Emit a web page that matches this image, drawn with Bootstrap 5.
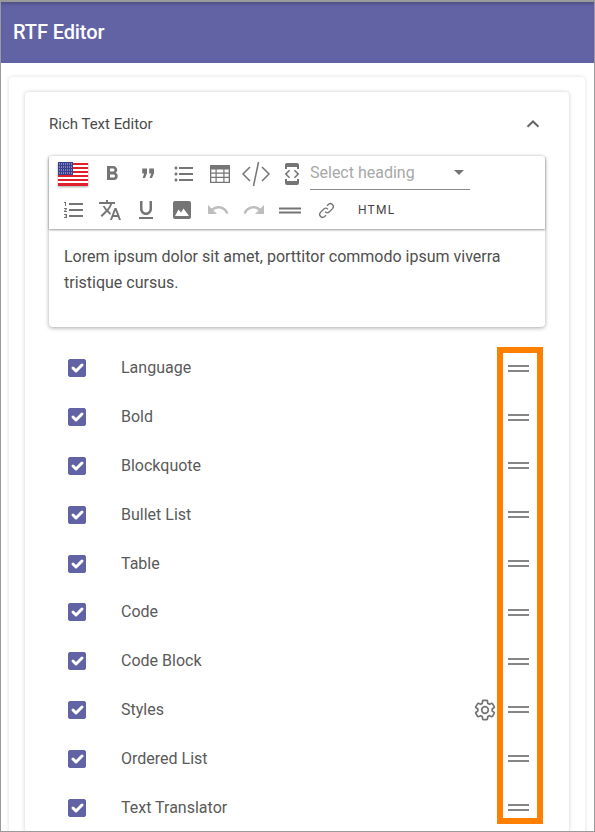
<!DOCTYPE html>
<html lang="en">
<head>
  <meta charset="UTF-8">
  <title>RTF Editor</title>
  <link href="https://cdn.jsdelivr.net/npm/bootstrap@5.3.0/dist/css/bootstrap.min.css" rel="stylesheet">
  <style>
    html, body { height: 100%; overflow: hidden; }
    body { background: #fff; font-family: Roboto, "Liberation Sans", sans-serif; color: #555; }

    .app-frame { height: 832px; overflow: hidden; border: 1px solid #9a9a9a; border-top-width: 2px; }
    .app-bar { height: 61px; background: #6163a5; color: #fff; font-size: 20px; font-weight: 500; letter-spacing: -.1px; padding: 0 0 2px 12px; box-shadow: inset 0 4px 4px -3px rgba(0,0,0,.3); }

    .outer-panel { margin: 14px 9px 0 8px; padding: 15px 16px 15px 16px; border: 0; border-radius: 4px; box-shadow: 0 0 4px rgba(0,0,0,.14); }
    .inner-panel { padding: 0 24px; border: 0; border-radius: 4px; box-shadow: 0 0 4px rgba(0,0,0,.2); }
    .panel-head { height: 64px; font-size: 15px; color: #4a4a4a; }

    .editor-box { border-radius: 4px; box-shadow: 0 1px 4px rgba(0,0,0,.35); }
    .tool-area { height: 73px; padding-left: 7px; box-shadow: 0 1px 2px rgba(0,0,0,.4); position: relative; }
    .tool-row { height: 36px; }
    .tool-btn { width: 36px; height: 36px; flex: none; color: #757575; }
    .tool-btn svg { width: 24px; height: 24px; fill: currentColor; }
    .tool-btn.is-off { color: #bdbdbd; }
    .tool-btn svg.code-icon { width: 30px; height: 30px; fill: none; stroke: currentColor; stroke-width: 1.5; }
    .tool-btn svg.link-icon { width: 21px; height: 21px; fill: none; stroke: currentColor; stroke-width: 1.5; }
    .flag-btn { width: 38px; padding-right: 4px; }
    .flag-btn svg { width: 30px; height: 24px; filter: drop-shadow(0 1px 1px rgba(0,0,0,.35)); }
    .heading-pick { width: 160px; height: 34px; align-self: flex-start; font-size: 16px; color: #a8a8a8; border-bottom: 1px solid #8a8a8a; }
    .pick-caret { width: 0; height: 0; margin-right: 6px; border-left: 5px solid transparent; border-right: 5px solid transparent; border-top: 5px solid #757575; }
    .html-btn { font-size: 12px; font-weight: 400; letter-spacing: 1.2px; color: #444; margin-left: 14px; }
    .editor-text { height: 98px; padding: 15px 15px; font-size: 16px; line-height: 26px; color: #4f4f4f; }

    .field-list { margin-top: 17px; }
    .field-row { height: 48.8px; font-size: 16px; color: #5a5a5a; }
    .field-row .form-check-input { width: 18px; height: 18px; margin: 0 0 0 19px; flex: none; border-radius: 2px; background-color: #6163a5; border-color: #6163a5; background-size: 125%; background-position: center; opacity: 1; }
    .field-name { margin-left: 35px; }
    .gear-icon { width: 24px; height: 24px; margin-right: 11px; fill: none; stroke: #757575; stroke-width: 1.7; }
    .drag-handle { width: 21px; margin-right: 16px; height: 7px; border-top: 2px solid #858585; border-bottom: 2px solid #858585; flex: none; }
    .orange-mark { position: absolute; left: 448px; top: 3px; width: 46px; height: 477px; border: 6px solid #ff8000; pointer-events: none; }
  </style>
</head>
<body>
  <div class="app-frame">
    <div class="app-bar d-flex align-items-center">RTF Editor</div>

    <div class="card outer-panel">
      <div class="card inner-panel">
        <div class="panel-head d-flex align-items-center justify-content-between">
          <span>Rich Text Editor</span>
          <svg width="24" height="24" viewBox="0 0 24 24" fill="none" stroke="#666" stroke-width="2"><path d="M6.5 14.8 12 9.5l5.5 5.3"/></svg>
        </div>

        <div class="editor-box bg-white">
          <div class="tool-area">
            <div class="tool-row d-flex align-items-center">
              <span class="tool-btn flag-btn d-flex align-items-center justify-content-center">
                <svg viewBox="0 0 30 24">
                  <rect width="30" height="24" fill="#fff"/>
                  <path d="M0 1h30v2H0zM0 5h30v2H0zM0 9h30v2H0zM0 13h30v2H0zM0 17h30v2H0zM0 21h30v3H0z" fill="#e0202c"/>
                  <rect width="15" height="13" fill="#3b3f8f"/>
                  <path d="M1 2h13M1 5h13M1 8h13M1 11h13" stroke="#c9cbe6" stroke-width="1" stroke-dasharray="1 1"/>
                </svg>
              </span>
              <span class="tool-btn d-flex align-items-center justify-content-center"><svg viewBox="0 0 24 24"><path d="M15.6 10.79c.97-.67 1.65-1.77 1.65-2.79 0-2.26-1.75-4-4-4H7v14h7.04c2.09 0 3.71-1.7 3.71-3.79 0-1.52-.86-2.82-2.15-3.42zM10 6.5h3c.83 0 1.5.67 1.5 1.5s-.67 1.5-1.5 1.5h-3v-3zm3.5 9H10v-3h3.5c.83 0 1.5.67 1.5 1.5s-.67 1.5-1.5 1.5z"/></svg></span>
              <span class="tool-btn d-flex align-items-center justify-content-center"><svg viewBox="0 0 24 24"><path d="M6.2 6.5H11v4.8L9 16H6.6l1.6-4.4h-2zM13.2 6.5H18v4.8L16 16h-2.4l1.6-4.4h-2z"/></svg></span>
              <span class="tool-btn d-flex align-items-center justify-content-center"><svg viewBox="0 0 24 24"><path d="M4 10.5c-.83 0-1.5.67-1.5 1.5s.67 1.5 1.5 1.5 1.5-.67 1.5-1.5-.67-1.5-1.5-1.5zm0-6c-.83 0-1.5.67-1.5 1.5S3.17 7.5 4 7.5 5.5 6.83 5.5 6 4.83 4.5 4 4.5zm0 12c-.83 0-1.5.68-1.5 1.5s.68 1.5 1.5 1.5 1.5-.68 1.5-1.5-.67-1.5-1.5-1.5zM7 19h14v-2H7v2zm0-6h14v-2H7v2zm0-8v2h14V5H7z"/></svg></span>
              <span class="tool-btn d-flex align-items-center justify-content-center"><svg viewBox="0 0 24 24"><path fill-rule="evenodd" d="M2 3h20v18H2zM3.3 7.5v3h4.2v-3zm5.4 0v3h6.6v-3zm7.8 0v3h4.2v-3zM3.3 11.7v3h4.2v-3zm5.4 0v3h6.6v-3zm7.8 0v3h4.2v-3zM3.3 15.9v3.8h4.2v-3.8zm5.4 0v3.8h6.6v-3.8zm7.8 0v3.8h4.2v-3.8z"/></svg></span>
              <span class="tool-btn d-flex align-items-center justify-content-center"><svg class="code-icon" viewBox="0 0 30 30"><path d="M9 8 2 15l7 7M21 8l7 7-7 7M17.5 3l-5 24"/></svg></span>
              <span class="tool-btn d-flex align-items-center justify-content-center"><svg viewBox="0 0 24 24"><path d="M7 5h10v2h2V3c0-1.1-.9-1.99-2-1.99L7 1c-1.1 0-2 .9-2 2v4h2V5zm6.9 10.2L17.1 12l-3.2-3.2L15 7.7l4.3 4.3-4.3 4.3zM10.1 15.2 6.9 12l3.2-3.2L9 7.7 4.7 12 9 16.3zM17 19H7v-2H5v4c0 1.1.9 2 2 2h10c1.1 0 2-.9 2-2v-4h-2v2z"/></svg></span>
              <div class="heading-pick d-flex align-items-center justify-content-between">
                <span>Select heading</span><span class="pick-caret"></span>
              </div>
            </div>
            <div class="tool-row d-flex align-items-center">
              <span class="tool-btn d-flex align-items-center justify-content-center"><svg viewBox="0 0 24 24"><path d="M2 17h2v.5H3v1h1v.5H2v1h3v-4H2v1zm1-9h1V4H2v1h1v3zm-1 3h1.8L2 13.1v.9h3v-1H3.2L5 10.9V10H2v1zm5-6v2h14V5H7zm0 14h14v-2H7v2zm0-6h14v-2H7v2z"/></svg></span>
              <span class="tool-btn d-flex align-items-center justify-content-center"><svg viewBox="0 0 24 24"><path d="M12.87 15.07l-2.54-2.51.03-.03c1.74-1.94 2.98-4.17 3.71-6.53H17V4h-7V2H8v2H1v1.99h11.17C11.5 7.92 10.44 9.75 9 11.35 8.07 10.32 7.3 9.19 6.69 8h-2c.73 1.63 1.73 3.17 2.98 4.56l-5.09 5.02L4 19l5-5 3.11 3.11.76-2.04zM18.5 10h-2L12 22h2l1.12-3h4.75L21 22h2l-4.5-12zm-2.62 7l1.62-4.33L19.12 17h-3.24z"/></svg></span>
              <span class="tool-btn d-flex align-items-center justify-content-center"><svg viewBox="0 0 24 24"><path d="M12 17c3.31 0 6-2.69 6-6V3h-2.5v8c0 1.93-1.57 3.5-3.5 3.5S8.5 12.93 8.5 11V3H6v8c0 3.31 2.69 6 6 6zm-7 2v2h14v-2H5z"/></svg></span>
              <span class="tool-btn d-flex align-items-center justify-content-center"><svg viewBox="0 0 24 24"><path d="M21 19V5c0-1.1-.9-2-2-2H5c-1.1 0-2 .9-2 2v14c0 1.1.9 2 2 2h14c1.1 0 2-.9 2-2zM8.5 11.5l2.5 3 2.5-4 5.5 7.5H5z"/></svg></span>
              <span class="tool-btn is-off d-flex align-items-center justify-content-center"><svg viewBox="0 0 24 24"><path d="M12.5 8c-2.65 0-5.05.99-6.9 2.6L2 7v9h9l-3.62-3.62c1.39-1.16 3.16-1.88 5.12-1.88 3.54 0 6.55 2.31 7.6 5.5l2.37-.78C21.08 11.03 17.15 8 12.5 8z"/></svg></span>
              <span class="tool-btn is-off d-flex align-items-center justify-content-center"><svg viewBox="0 0 24 24"><path d="M18.4 10.6C16.55 8.99 14.15 8 11.5 8c-4.65 0-8.58 3.03-9.96 7.22L3.9 16c1.05-3.19 4.05-5.5 7.6-5.5 1.95 0 3.73.72 5.12 1.88L13 16h9V7l-3.6 3.6z"/></svg></span>
              <span class="tool-btn d-flex align-items-center justify-content-center"><svg viewBox="0 0 24 24"><path d="M1 9.5h22v2H1zM1 13.5h22v2H1z"/></svg></span>
              <span class="tool-btn d-flex align-items-center justify-content-center"><svg class="link-icon" viewBox="0 0 24 24"><path d="M10.5 13.5a3.4 3.4 0 0 0 4.8 0l3.6-3.6a3.4 3.4 0 0 0-4.8-4.8l-1.6 1.6M13.5 10.5a3.4 3.4 0 0 0-4.8 0l-3.6 3.6a3.4 3.4 0 0 0 4.8 4.8l1.6-1.6"/></svg></span>
              <span class="html-btn">HTML</span>
            </div>
          </div>
          <div class="editor-text">Lorem ipsum dolor sit amet, porttitor commodo ipsum viverra tristique cursus.</div>
        </div>

        <div id="fields" class="field-list position-relative"></div>
      </div>
    </div>
  </div>

  <script>
    const names = ['Language', 'Bold', 'Blockquote', 'Bullet List', 'Table', 'Code', 'Code Block', 'Styles', 'Ordered List', 'Text Translator'];
    const gear = '<svg class="gear-icon" viewBox="0 0 24 24"><circle cx="12" cy="12" r="3.3"/><path d="M19.14 12.94c.04-.3.06-.61.06-.94 0-.32-.02-.64-.07-.94l2.03-1.58c.18-.14.23-.41.12-.61l-1.92-3.32c-.12-.22-.37-.29-.59-.22l-2.39.96c-.5-.38-1.03-.7-1.62-.94l-.36-2.54c-.04-.24-.24-.41-.48-.41h-3.84c-.24 0-.43.17-.47.41l-.36 2.54c-.59.24-1.13.57-1.62.94l-2.39-.96c-.22-.08-.47 0-.59.22L2.74 8.87c-.12.21-.08.47.12.61l2.03 1.58c-.05.3-.09.63-.09.94s.02.64.07.94l-2.03 1.58c-.18.14-.23.41-.12.61l1.92 3.32c.12.22.37.29.59.22l2.39-.96c.5.38 1.03.7 1.62.94l.36 2.54c.05.24.24.41.48.41h3.84c.24 0 .44-.17.47-.41l.36-2.54c.59-.24 1.13-.56 1.62-.94l2.39.96c.22.08.47 0 .59-.22l1.92-3.32c.12-.22.07-.47-.12-.61l-2.01-1.58z"/></svg>';
    let html = '';
    names.forEach(name => {
      html += `
        <div class="field-row d-flex align-items-center">
          <input class="form-check-input" type="checkbox" checked disabled>
          <span class="field-name me-auto">${name}</span>
          ${name === 'Styles' ? gear : ''}
          <span class="drag-handle"></span>
        </div>`;
    });
    html += '<div class="orange-mark"></div>';
    document.getElementById('fields').innerHTML = html;
  </script>
  <script src="https://cdn.jsdelivr.net/npm/bootstrap@5.3.0/dist/js/bootstrap.bundle.min.js"></script>
</body>
</html>
